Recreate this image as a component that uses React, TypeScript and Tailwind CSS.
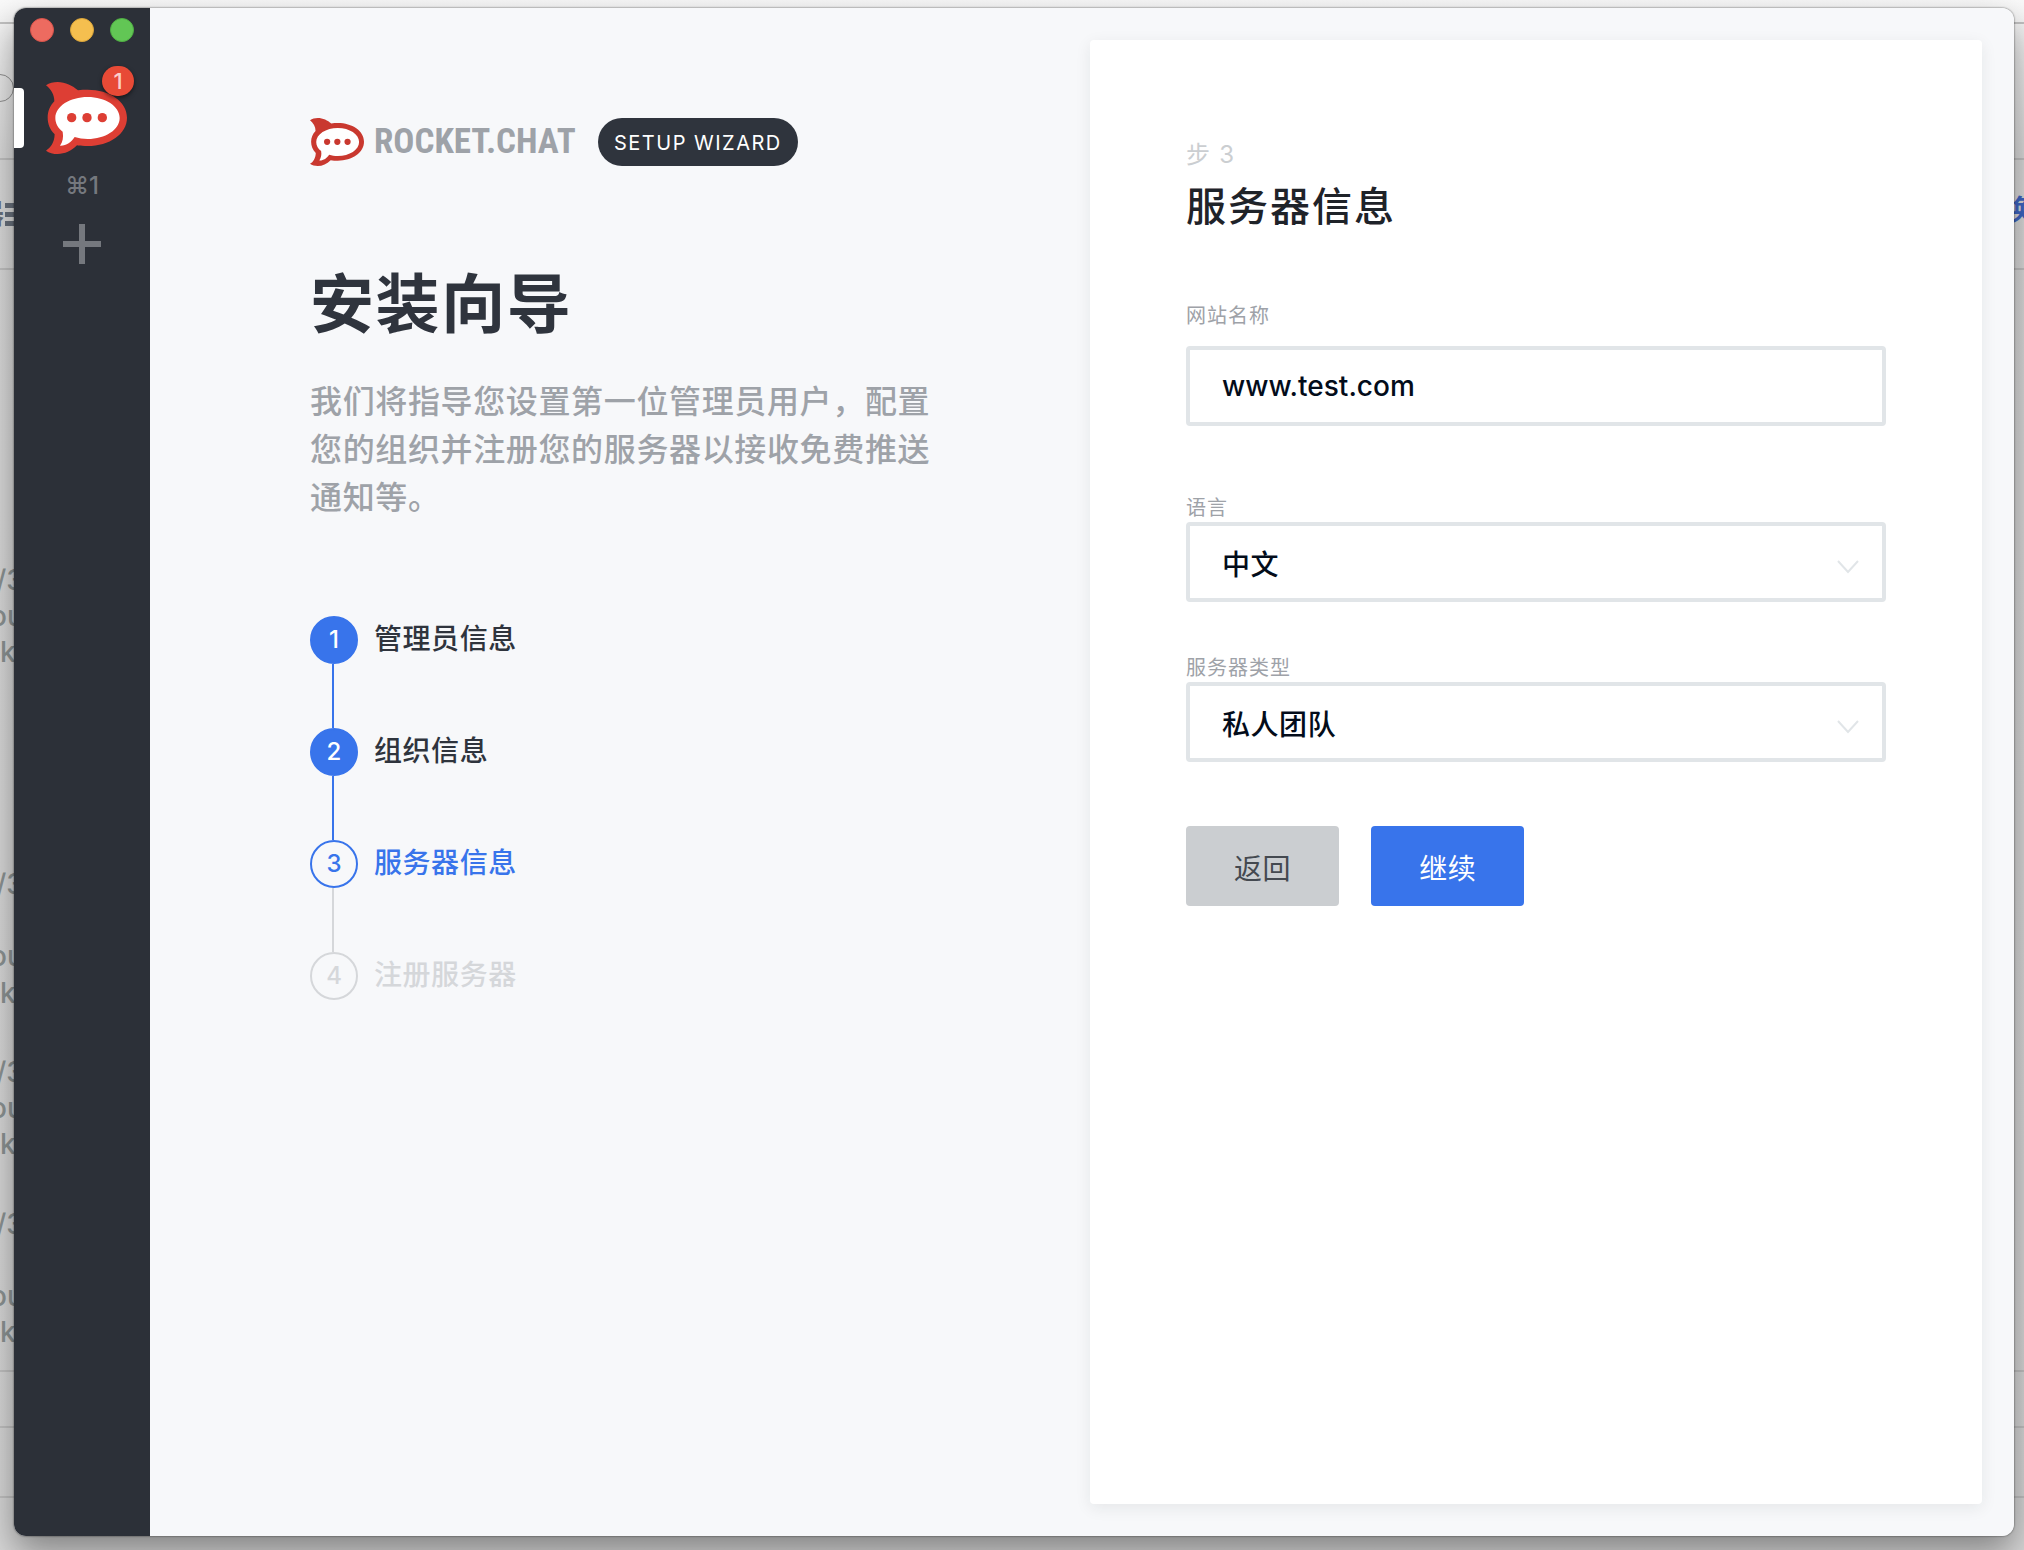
import React from "react";

const backdropLines = [
  "top-[22px]",
  "top-[158px]",
  "top-[268px]",
  "top-[1370px]",
  "top-[1426px]",
  "top-[1496px]",
];

const backdropText = [
  { text: "/3", place: "top-[564px] -left-1" },
  { text: "ou", place: "top-[600px] -left-2.5" },
  { text: "k", place: "top-[636px] left-0" },
  { text: "/3", place: "top-[868px] -left-1" },
  { text: "ou", place: "top-[940px] -left-2.5" },
  { text: "k", place: "top-[977px] left-0" },
  { text: "/3", place: "top-[1056px] -left-1" },
  { text: "ou", place: "top-[1092px] -left-2.5" },
  { text: "k", place: "top-[1128px] left-0" },
  { text: "/3", place: "top-[1208px] -left-1" },
  { text: "ou", place: "top-[1280px] -left-2.5" },
  { text: "k", place: "top-[1316px] left-0" },
];

type StepState = "done" | "current" | "todo";

const steps: { label: string; state: StepState }[] = [
  { label: "管理员信息", state: "done" },
  { label: "组织信息", state: "done" },
  { label: "服务器信息", state: "current" },
  { label: "注册服务器", state: "todo" },
];

const badgeStyle: Record<StepState, string> = {
  done: "border-[#3874eb] bg-[#3874eb] text-white",
  current: "border-[#3874eb] text-[#3874eb]",
  todo: "border-[#d5d7da] text-[#d5d7da]",
};

const labelStyle: Record<StepState, string> = {
  done: "text-[#2f343d]",
  current: "text-[#3874eb]",
  todo: "text-[#d5d7da]",
};

function RocketMark({ className }: { className: string }) {
  return (
    <svg viewBox="0 0 243 216" className={className} aria-hidden="true">
      <path
        fill="currentColor"
        d="M0 10C10 3 22 0 35 0C58 0 80 11 96 25C105 23 115 23 125 23C190 23 243 58 243 107C243 156 190 192 125 192C114 192 103 192 93 190C76 207 56 216 35 216C22 216 9 213 0 206C14 197 25 182 26 157C12 143 5 126 5 107C5 88 12 71 25 58C25 38 15 22 0 10Z"
      />
      <path
        fill="#fff"
        d="M125 45C178 45 221 73 221 108C221 143 178 171 125 171C111 171 98 169 86 165C76 181 60 192 42 191C50 179 53 166 50 149C36 138 28 124 28 108C28 73 72 45 125 45Z"
      />
      <circle cx="77" cy="107" r="14" fill="currentColor" />
      <circle cx="123" cy="107" r="14" fill="currentColor" />
      <circle cx="169" cy="107" r="14" fill="currentColor" />
    </svg>
  );
}

function Backdrop() {
  return (
    <div
      aria-hidden="true"
      className="absolute inset-0 overflow-hidden bg-linear-to-b from-[#fafafa] via-[#dcdcdc] via-10% to-[#d8d8d8]"
    >
      {backdropLines.map((place) => (
        <div key={place} className={`absolute inset-x-0 h-0.5 bg-[#c2c2c2] ${place}`} />
      ))}
      <div className="absolute top-[74px] -left-4 h-7 w-[30px] rounded-full border border-[#909090]" />
      <div className="absolute top-[203px] left-[5px] flex h-[23px] w-5 flex-col justify-between">
        <span className="h-[5px] bg-[#69717d]" />
        <span className="h-[5px] bg-[#69717d]" />
        <span className="h-[5px] bg-[#69717d]" />
      </div>
      <span className="absolute top-[198px] -left-6 text-[28px] leading-8 font-bold text-[#69717d]">器</span>
      <span className="absolute top-[194px] -right-2 text-[28px] leading-8 font-bold text-[#3f66c4]">换</span>
      {backdropText.map(({ text, place }) => (
        <span key={place} className={`absolute text-[28px] leading-8 font-medium text-[#8d9494] ${place}`}>
          {text}
        </span>
      ))}
    </div>
  );
}

function Sidebar() {
  return (
    <aside className="flex w-[136px] shrink-0 flex-col bg-[#2c3038]">
      <div className="flex gap-4 px-4 pt-2.5">
        <button aria-label="关闭" className="size-6 rounded-full border border-[#d9534b] bg-[#ed6b60]" />
        <button aria-label="最小化" className="size-6 rounded-full border border-[#dba53a] bg-[#f5bf4f]" />
        <button aria-label="缩放" className="size-6 rounded-full border border-[#4fae43] bg-[#62c655]" />
      </div>
      <div className="relative mt-10 flex h-[72px] justify-center">
        <span className="absolute top-1.5 left-0 h-[60px] w-2.5 rounded-r bg-white" />
        <button aria-label="Rocket.Chat" className="ml-2 h-[72px] w-[81px] text-[#dd3e34]">
          <RocketMark className="h-full w-full" />
        </button>
        <span className="absolute -top-4 left-[88px] flex h-[30px] w-8 items-center justify-center rounded-full bg-[#e84a36] text-[22px] font-medium text-[#fbd0cb] shadow-[0_2px_4px_rgba(0,0,0,0.5)]">
          1
        </span>
      </div>
      <div className="mt-4 flex items-center justify-center text-2xl leading-8 font-medium text-[#75787e]">
        ⌘1
      </div>
      <button aria-label="添加服务器" className="mt-[22px] flex justify-center text-[#75787e]">
        <svg viewBox="0 0 40 40" className="size-10" aria-hidden="true">
          <path d="M20 0V40M1 20H39" stroke="currentColor" strokeWidth="6" />
        </svg>
      </button>
    </aside>
  );
}

function Intro() {
  return (
    <section className="flex-1 pt-[110px] pr-36 pl-40">
      <header className="flex items-center">
        <RocketMark className="h-12 w-[54px] text-[#c9382f]" />
        <span className="ml-2.5 w-[224px] font-['Roboto_Condensed','Roboto',sans-serif] text-[35px] leading-12 font-bold text-[#9ea2a8]">
          ROCKET.CHAT
        </span>
        <span className="flex h-12 items-center rounded-full bg-[#2f343d] px-4 pt-0.5 text-xl tracking-[0.075em] whitespace-nowrap text-white">
          SETUP WIZARD
        </span>
      </header>
      <h1 className="mt-[90px] text-[64px] leading-24 font-semibold tracking-wide text-[#2f343d]">安装向导</h1>
      <p className="mt-[26px] max-w-[640px] text-[32px] leading-12 font-medium tracking-[0.02em] text-[#9ea2a8]">
        我们将指导您设置第一位管理员用户，配置您的组织并注册您的服务器以接收免费推送通知等。
      </p>
      <ol className="mt-[94px]">
        {steps.map(({ label, state }, i) => (
          <li key={label}>
            {i > 0 && (
              <div className={`ml-[22px] h-16 w-0.5 ${state === "todo" ? "bg-[#d5d7da]" : "bg-[#3874eb]"}`} />
            )}
            <div className="flex items-center gap-4">
              <span
                className={`flex size-12 items-center justify-center rounded-full border-2 text-2xl font-medium ${badgeStyle[state]}`}
              >
                {i + 1}
              </span>
              <span className={`pb-0.5 text-[28px] leading-10 font-medium tracking-[0.02em] ${labelStyle[state]}`}>
                {label}
              </span>
            </div>
          </li>
        ))}
      </ol>
    </section>
  );
}

function SelectField({ id, label, value }: { id: string; label: string; value: string }) {
  return (
    <div className="flex flex-col">
      <label htmlFor={id} className="pt-1 text-xl leading-7 tracking-wider text-[#9ea2a8]">
        {label}
      </label>
      <div className="relative">
        <select
          id={id}
          className="h-20 w-full appearance-none rounded border-4 border-[#e1e5e8] bg-white px-8 pt-1.5 text-[28px] font-medium tracking-[0.02em] text-[#030c1a]"
        >
          <option>{value}</option>
        </select>
        <svg
          viewBox="0 0 22 14"
          className="pointer-events-none absolute top-[38px] right-[27px] h-3.5 w-[22px] text-[#e1e5e8]"
          aria-hidden="true"
        >
          <path d="M1 1L11 12L21 1" fill="none" stroke="currentColor" strokeWidth="2" />
        </svg>
      </div>
    </div>
  );
}

function ServerForm() {
  return (
    <form
      onSubmit={(e) => e.preventDefault()}
      className="m-8 ml-0 w-[892px] rounded bg-white px-24 pt-24 shadow-[0_4px_16px_rgba(31,35,41,0.08)]"
    >
      <p className="text-2xl leading-[38px] tracking-wider text-[#cbced1]">步 3</p>
      <h2 className="text-[40px] leading-[66px] font-medium tracking-wider text-[#1f2329]">服务器信息</h2>
      <div className="mt-[58px] flex flex-col">
        <label htmlFor="site-name" className="pt-1 text-xl leading-7 tracking-wider text-[#9ea2a8]">
          网站名称
        </label>
        <input
          id="site-name"
          type="text"
          defaultValue="www.test.com"
          className="mt-4 h-20 rounded border-4 border-[#e1e5e8] px-8 text-[28px] font-medium text-[#030c1a]"
        />
      </div>
      <div className="mt-16 flex flex-col gap-12">
        <SelectField id="language" label="语言" value="中文" />
        <SelectField id="server-type" label="服务器类型" value="私人团队" />
      </div>
      <div className="mt-16 flex gap-8">
        <button type="button" className="h-20 rounded bg-[#cbced1] px-12 pt-1.5 text-[28px] tracking-[0.02em] text-[#444950]">
          返回
        </button>
        <button type="submit" className="h-20 rounded bg-[#3874eb] px-12 pt-1.5 text-[28px] tracking-[0.02em] text-white">
          继续
        </button>
      </div>
    </form>
  );
}

export default function App() {
  return (
    <div className="relative flex min-h-screen pt-2 pr-2.5 pb-3.5 pl-3.5 font-['Inter','Noto_Sans_CJK_SC',sans-serif]">
      <Backdrop />
      <main className="relative flex flex-1 rounded-xl shadow-[0_0_2px_rgba(0,0,0,0.7),0_16px_36px_rgba(0,0,0,0.4)]">
        <div className="flex flex-1 overflow-hidden rounded-xl bg-[#f7f8fa]">
          <Sidebar />
          <Intro />
          <ServerForm />
        </div>
      </main>
    </div>
  );
}
